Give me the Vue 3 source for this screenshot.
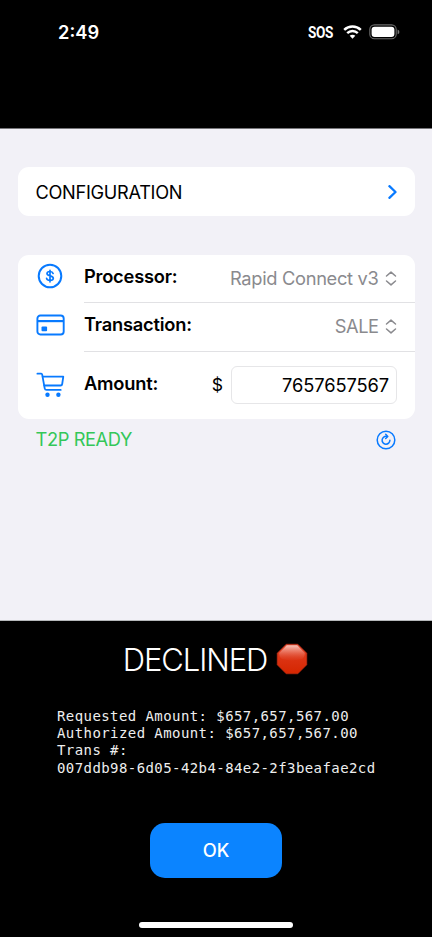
<script setup>
import { ref } from 'vue'

const amount = ref('7657657567')
const receipt = [
  'Requested Amount: $657,657,567.00',
  'Authorized Amount: $657,657,567.00',
  'Trans #:',
  '007ddb98-6d05-42b4-84e2-2f3beafae2cd',
]
</script>

<template>
  <div class="screen">
    <header class="status">
      <span class="time">2:49</span>
      <div class="indicators">
        <span class="sos">SOS</span>
        <svg class="wifi" width="19" height="14" viewBox="0 0 19 14" fill="none" stroke="#fff">
          <path d="M1.2 4.9C5.9.4 13.1.4 17.8 4.9" stroke-width="2.5" />
          <path d="M4.2 8.2C7.2 5.3 11.8 5.3 14.8 8.2" stroke-width="2.4" />
          <path d="M6.7 10.8C8.3 9.3 10.7 9.3 12.3 10.8L9.5 13.8Z" fill="#fff" stroke="none" />
        </svg>
        <svg class="battery" width="31" height="16" viewBox="0 0 31 16">
          <rect x=".8" y=".9" width="26.4" height="13.9" rx="4.6" fill="none" stroke="#6b6b6b" stroke-width="1.1" />
          <rect x="2.6" y="2.7" width="22.8" height="10.3" rx="3" fill="#fff" />
          <path d="M28.6 5.6Q30.4 6.3 30.4 7.9Q30.4 9.5 28.6 10.2Z" fill="#777" />
        </svg>
      </div>
    </header>

    <main class="form">
      <section class="card config">
        <span class="config-label">CONFIGURATION</span>
        <svg width="9" height="14" viewBox="0 0 9 14" fill="none" stroke="#087aff" stroke-width="2.3" stroke-linecap="round" stroke-linejoin="round">
          <path d="M1.4 1.2L7.5 7L1.4 12.8" />
        </svg>
      </section>

      <section class="card details">
        <div class="row">
          <div class="icon">
            <svg class="coin" width="26" height="26" viewBox="0 0 26 26" fill="none" stroke="#087aff">
              <circle cx="13" cy="13" r="11.3" stroke-width="2" />
              <path d="M16.1 10.4C15.7 9.1 14.6 8.5 13 8.5C11.3 8.5 10 9.3 10 10.6C10 11.9 11.1 12.4 13 12.8C15.1 13.3 16.3 13.9 16.3 15.3C16.3 16.7 15 17.5 13 17.5C11.2 17.5 9.9 16.8 9.6 15.4M13 7.3V18.8" stroke-width="1.7" stroke-linecap="round" />
            </svg>
          </div>
          <div class="body first">
            <span class="label processor">Processor:</span>
            <span class="value rapid">Rapid Connect v3</span>
            <svg class="updown" width="12" height="15" viewBox="0 0 12 15" fill="none" stroke="#8a8a8e" stroke-width="1.5" stroke-linecap="round" stroke-linejoin="round">
              <path d="M1.5 5L6 1.1L10.5 5M1.5 10L6 13.9L10.5 10" />
            </svg>
          </div>
        </div>
        <div class="row">
          <div class="icon">
            <svg width="30" height="22" viewBox="0 0 30 22" fill="none" stroke="#087aff">
              <rect x="1.4" y="1.5" width="26.3" height="19" rx="3" stroke-width="1.9" />
              <path d="M1.5 7.1H27.5" stroke-width="2.2" />
              <rect x="5.5" y="12.5" width="5.6" height="4.8" rx="1" fill="#087aff" stroke="none" />
            </svg>
          </div>
          <div class="body second">
            <span class="label transaction">Transaction:</span>
            <span class="value sale">SALE</span>
            <svg class="updown" width="12" height="15" viewBox="0 0 12 15" fill="none" stroke="#8a8a8e" stroke-width="1.5" stroke-linecap="round" stroke-linejoin="round">
              <path d="M1.5 5L6 1.1L10.5 5M1.5 10L6 13.9L10.5 10" />
            </svg>
          </div>
        </div>
        <div class="row amount-row">
          <div class="icon">
            <svg width="30" height="26" viewBox="0 0 30 26" fill="none" stroke="#087aff" stroke-width="1.8" stroke-linecap="round" stroke-linejoin="round">
              <path d="M1.4 1.7H5.2Q6 1.7 6.2 2.6L8.7 16.3Q9 17.9 10.5 17.9H24.7" />
              <path d="M6.7 4.7H27.3L26.2 12Q26 13.5 24.5 13.5H8.3" />
              <circle cx="11.5" cy="22.7" r="2.2" fill="#087aff" stroke="none" />
              <circle cx="22.4" cy="22.7" r="2.2" fill="#087aff" stroke="none" />
            </svg>
          </div>
          <div class="body last">
            <span class="label amount">Amount:</span>
            <span class="currency">$</span>
            <input v-model="amount" class="field" type="text" aria-label="Amount" />
          </div>
        </div>
      </section>

      <div class="ready">
        <span class="ready-text">T2P READY</span>
        <svg width="20" height="20" viewBox="0 0 20 20" fill="none" stroke="#087aff" stroke-linecap="round" stroke-linejoin="round">
          <circle cx="10" cy="10" r="8.8" stroke-width="1.5" />
          <path d="M10.7 6.4A3.9 3.9 0 1 0 13.9 10.3" stroke-width="1.5" />
          <path d="M9.7 4.3L11.8 6.5L9.7 8.5" stroke-width="1.5" />
        </svg>
      </div>
    </main>

    <section class="result">
      <h1 class="title">
        <span class="declined">DECLINED</span>
        <svg width="32" height="32" viewBox="0 0 32 32">
          <defs>
            <linearGradient id="sign" x1="0" y1="0" x2="0" y2="1">
              <stop offset="0" stop-color="#e64a2f" />
              <stop offset=".4" stop-color="#dc3516" />
              <stop offset="1" stop-color="#d52600" />
            </linearGradient>
            <linearGradient id="shine" x1="0" y1="0" x2="0" y2="1">
              <stop offset="0" stop-color="#f8c5bb" />
              <stop offset="1" stop-color="#e4563c" stop-opacity=".1" />
            </linearGradient>
          </defs>
          <path d="M10.2 1.2H21.8L30.8 10.2V21.8L21.8 30.8H10.2L1.2 21.8V10.2Z" fill="url(#sign)" stroke="#b82b14" stroke-width=".6" />
          <path d="M10.8 2.2H21.2L28.8 10Q28.8 14.5 26 16Q16 18.5 6 16Q3.2 14.5 3.2 10Z" fill="url(#shine)" />
        </svg>
      </h1>
      <div class="receipt">
        <div v-for="line in receipt" :key="line">{{ line }}</div>
      </div>
      <button class="ok">OK</button>
      <div class="home"></div>
    </section>
  </div>
</template>

<style>
body {
  background: #000;
}
</style>

<style scoped>
.screen {
  box-sizing: border-box;
  width: 432px;
  height: 937px;
  display: flex;
  flex-direction: column;
  background: #000;
  color: #000;
  font-family: Inter, "Liberation Sans", sans-serif;
  font-size: 18.3px;
  overflow: hidden;
}
.screen *,
.screen *::before {
  box-sizing: border-box;
}
svg {
  display: block;
  flex: none;
}
.status {
  height: 128px;
  flex: none;
  display: flex;
  justify-content: space-between;
  align-items: flex-start;
  padding: 20px 32px 0 58px;
  color: #fff;
}
.time {
  font-size: 18.3px;
  line-height: 25px;
  font-weight: 600;
}
.indicators {
  display: flex;
  align-items: center;
  height: 24px;
}
.sos {
  width: 25px;
  font-family: Roboto, sans-serif;
  font-weight: 700;
  font-size: 16.8px;
  letter-spacing: -0.5px;
  white-space: nowrap;
  transform: scaleX(0.81);
  transform-origin: left center;
}
.wifi {
  margin-left: 10px;
}
.battery {
  margin-left: 7px;
}
.form {
  height: 493px;
  flex: none;
  background: #f2f1f7;
  border-top: 1px solid #77767a;
  border-bottom: 1px solid #b5b8ba;
  padding: 38px 17.5px 0 18px;
}
.card {
  background: #fff;
  border-radius: 11px;
}
.config {
  height: 48.5px;
  display: flex;
  align-items: center;
  justify-content: space-between;
  padding: 1px 17.5px 0;
}
.config-label {
  font-size: 18.2px;
  letter-spacing: -0.3px;
}
.details {
  margin-top: 39px;
  height: 164.5px;
}
.row {
  display: flex;
  height: 48.5px;
}
.icon {
  width: 66px;
  padding-left: 17.5px;
  display: flex;
  align-items: center;
}
.coin {
  margin-left: 1.5px;
}
.row:first-child .icon {
  padding-bottom: 5px;
}
.body {
  flex: 1;
  display: flex;
  align-items: center;
  border-bottom: 1px solid #e1e1e4;
  padding-right: 18px;
}
.row:nth-child(2) .icon {
  padding-bottom: 5px;
}
.label {
  font-weight: 600;
  flex: 1;
  padding-bottom: 5px;
  letter-spacing: -0.22px;
}
.value {
  color: #8a8a8e;
  padding-bottom: 1px;
  margin-right: 6px;
}
.rapid {
  letter-spacing: -0.32px;
}
.sale {
  letter-spacing: -0.5px;
}
.row.amount-row {
  height: 67.5px;
}
.body.last {
  border: 0;
  padding-right: 17.5px;
}
.label.amount {
  padding-bottom: 4px;
}
.currency {
  margin-right: 8px;
  padding-bottom: 1px;
  font-size: 17.6px;
}
.field {
  width: 166px;
  height: 38px;
  border: 1px solid #e6e6e8;
  border-radius: 6px;
  background: #fff;
  color: #000;
  font: inherit;
  letter-spacing: -0.1px;
  text-align: right;
  padding: 0 7px 1px;
  outline: none;
}
.ready {
  display: flex;
  justify-content: space-between;
  align-items: center;
  height: 41px;
  padding: 0 18.5px 0 17.5px;
  color: #34c759;
}
.ready-text {
  padding-bottom: 1px;
  letter-spacing: -0.4px;
}
.result {
  flex: 1;
  display: flex;
  flex-direction: column;
  align-items: center;
  color: #fff;
}
.title {
  margin: 20px 1px 0 0;
  height: 36px;
  display: flex;
  align-items: center;
  gap: 9px;
  font-weight: 300;
  font-size: 31px;
}
.declined {
  letter-spacing: -1.1px;
}
.receipt {
  align-self: flex-start;
  margin: 31px 0 0 57px;
  font-family: "DejaVu Sans Mono", "Liberation Mono", monospace;
  font-size: 14px;
  line-height: 17.2px;
  letter-spacing: 0.42px;
  white-space: nowrap;
  color: #eee;
}
.ok {
  margin-top: 46px;
  width: 132px;
  height: 55px;
  border: 0;
  border-radius: 15px;
  background: #0b84ff;
  color: #fff;
  font: inherit;
  font-weight: 500;
  padding: 0;
}
.home {
  margin-top: 44px;
  width: 154px;
  height: 6px;
  border-radius: 3px;
  background: #fff;
}
</style>
